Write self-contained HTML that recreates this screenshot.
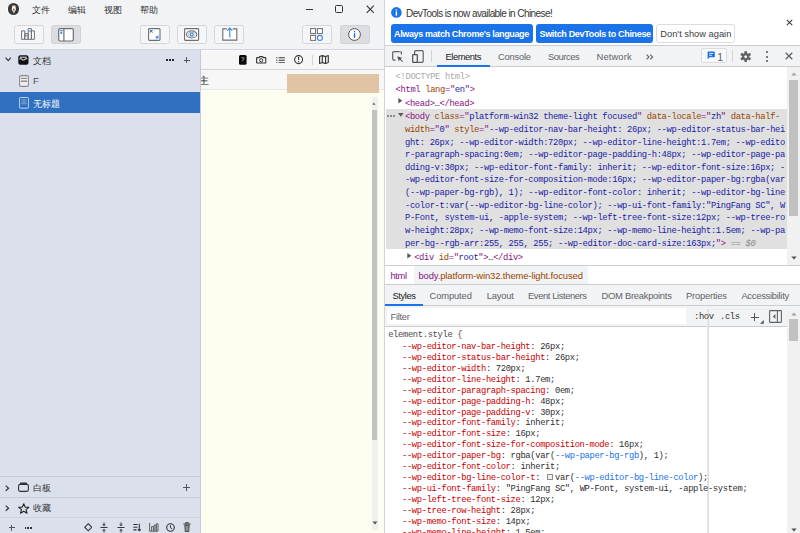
<!DOCTYPE html>
<html><head><meta charset="utf-8">
<style>
*{margin:0;padding:0;box-sizing:border-box}
html,body{width:800px;height:533px;overflow:hidden;background:#fff}
.r,.t{position:absolute}
.t{white-space:pre}
</style></head><body>
<div class="r" style="left:0px;top:0px;width:384px;height:50px;background:#f2f3f5;"></div>
<div class="r" style="left:0px;top:49px;width:384px;height:1px;background:#d0d4dc;"></div>
<div class="r" style="left:384px;top:0px;width:1px;height:533px;background:#d2d4d8;"></div>
<div class="r" style="left:7px;top:2.6px;width:13px;height:13px;border-radius:50%;background:#fff"></div>
<div class="r" style="left:7.7px;top:3.2px;width:11.7px;height:11.7px;border-radius:50%;background:#3a3a3a"></div>
<svg class="r" style="left:7.7px;top:3.2px;" width="12" height="12" viewBox="0 0 12 12"><path d="M4.3 2.9 H7.4 L7.9 6.6 L5.85 10.6 L3.8 6.6 Z" fill="#fff"/><rect x="4.3" y="2.2" width="3.1" height="1.1" fill="#e08a3c"/><path d="M5.85 6.4 V9.6" stroke="#3a3a3a" stroke-width="0.6"/><circle cx="5.85" cy="6.3" r="0.75" fill="#3a3a3a"/></svg>
<div class="t" style="left:31.6px;top:4.73px;font:normal 9px/11.7px 'Liberation Sans',sans-serif;color:#333;letter-spacing:0px;">文件</div>
<div class="t" style="left:67.6px;top:4.73px;font:normal 9px/11.7px 'Liberation Sans',sans-serif;color:#333;letter-spacing:0px;">编辑</div>
<div class="t" style="left:103.5px;top:4.73px;font:normal 9px/11.7px 'Liberation Sans',sans-serif;color:#333;letter-spacing:0px;">视图</div>
<div class="t" style="left:140px;top:4.73px;font:normal 9px/11.7px 'Liberation Sans',sans-serif;color:#333;letter-spacing:0px;">帮助</div>
<div class="r" style="left:305.5px;top:8.6px;width:7.6px;height:1.3px;background:#333;"></div>
<div class="r" style="left:335.2px;top:5px;width:7.9px;height:8.1px;border:1.3px solid #333;border-radius:1.5px"></div>
<svg class="r" style="left:365.5px;top:4.8px;" width="9" height="9" viewBox="0 0 9 9"><path d="M0.7 0.7 L7.8 7.8 M7.8 0.7 L0.7 7.8" stroke="#333" stroke-width="1.1"/></svg>
<div class="r" style="left:13.5px;top:25.2px;width:30px;height:18.5px;border:1px solid #d2d5db;border-radius:2.5px;background:#f5f6f8"></div>
<div class="r" style="left:51.1px;top:25.2px;width:30px;height:18.5px;border:1px solid #d0d2d7;border-radius:2.5px;background:#dcdde1"></div>
<div class="r" style="left:139.5px;top:25.2px;width:30px;height:18.5px;border:1px solid #d2d5db;border-radius:2.5px;background:#f5f6f8"></div>
<div class="r" style="left:177px;top:25.2px;width:30px;height:18.5px;border:1px solid #d2d5db;border-radius:2.5px;background:#f5f6f8"></div>
<div class="r" style="left:214.4px;top:25.2px;width:30px;height:18.5px;border:1px solid #d2d5db;border-radius:2.5px;background:#f5f6f8"></div>
<div class="r" style="left:302px;top:25.2px;width:30px;height:18.5px;border:1px solid #d2d5db;border-radius:2.5px;background:#f5f6f8"></div>
<div class="r" style="left:339.5px;top:25.2px;width:30px;height:18.5px;border:1px solid #d0d2d7;border-radius:2.5px;background:#dcdde1"></div>
<svg class="r" style="left:21.4px;top:28.4px;" width="14" height="12" viewBox="0 0 14 12"><path d="M0.6 2.9 H3.8 V11.3 H0.6 Z M3.8 5.7 H7.2 V11.3 H3.8 Z M7.2 0.6 H10.4 V11.3 H7.2 Z M10.4 2.9 H13.4 V11.3 H10.4 Z" fill="#fff" stroke="#6e6e6e" stroke-width="1" stroke-linejoin="round"/><rect x="4.2" y="7.2" width="2.6" height="1.1" fill="#3a86e0"/><rect x="7.7" y="2.5" width="2.2" height="1.1" fill="#3a86e0"/></svg>
<svg class="r" style="left:58px;top:27.6px;" width="16" height="14" viewBox="0 0 16 14"><rect x="0.7" y="0.7" width="14.6" height="12.3" rx="1.5" fill="#fff" stroke="#6e6e6e" stroke-width="1.2"/><path d="M5.9 0.7 V13" stroke="#6e6e6e" stroke-width="1.2"/><rect x="1.8" y="2.2" width="3" height="0.9" fill="#3a86e0"/><rect x="2.4" y="3.7" width="1.8" height="2.2" fill="#3a86e0"/></svg>
<svg class="r" style="left:148px;top:27.8px;" width="13" height="13" viewBox="0 0 13 13"><rect x="0.6" y="0.6" width="11.4" height="11.8" rx="0.8" fill="#fff" stroke="#6e6e6e" stroke-width="1.1"/><path d="M1.9 1.9 H5.2 L1.9 5.2 Z M10.5 10.6 H7.2 L10.5 7.3 Z" fill="#3d87e0"/><path d="M2.6 2.6 L4.6 4.6 M9.8 9.9 L7.8 7.9" stroke="#3d87e0" stroke-width="1"/></svg>
<svg class="r" style="left:184px;top:27.8px;" width="16" height="13" viewBox="0 0 16 13"><rect x="0.6" y="0.6" width="14" height="11.8" rx="0.8" fill="#fff" stroke="#6e6e6e" stroke-width="1.1"/><ellipse cx="7.6" cy="6.4" rx="5.2" ry="3.5" fill="none" stroke="#7a7a7a" stroke-width="1.1"/><ellipse cx="7.6" cy="6.4" rx="3.6" ry="2.4" fill="none" stroke="#b0b0b0" stroke-width="0.7"/><circle cx="7.6" cy="6.4" r="2.1" fill="#4a90e2"/><path d="M7 5.3 L8.9 6.4 L7 7.5 Z" fill="#fff"/></svg>
<svg class="r" style="left:221.9px;top:27px;" width="16" height="14" viewBox="0 0 16 14"><path d="M4.8 1.9 H0.8 V13.1 H14.8 V1.9 H10.8" fill="#fff" stroke="#6e6e6e" stroke-width="1.1"/><path d="M7.8 10.5 V1.2 M5.3 3.6 L7.8 1.1 L10.3 3.6" fill="none" stroke="#3a86e0" stroke-width="1.1"/></svg>
<svg class="r" style="left:310px;top:27.6px;" width="14" height="14" viewBox="0 0 14 14"><rect x="0.6" y="0.6" width="5" height="5" fill="#fff" stroke="#6e6e6e" stroke-width="1"/><rect x="7.4" y="0.6" width="5" height="5" fill="#fff" stroke="#6e6e6e" stroke-width="1"/><rect x="0.6" y="7.4" width="5" height="5" fill="#fff" stroke="#6e6e6e" stroke-width="1"/><circle cx="9.9" cy="9.9" r="2.5" fill="#fff" stroke="#3a86e0" stroke-width="1.1"/></svg>
<svg class="r" style="left:347.6px;top:27.6px;" width="13" height="13" viewBox="0 0 13 13"><circle cx="6.5" cy="6.5" r="5.9" fill="#fff" stroke="#555" stroke-width="1"/><circle cx="6.5" cy="3.7" r="0.8" fill="#1a6fd6"/><rect x="5.8" y="5.2" width="1.4" height="4.6" fill="#1a6fd6"/></svg>
<div class="r" style="left:0px;top:50px;width:200px;height:483px;background:#dbe0ec;"></div>
<div class="r" style="left:0px;top:91.6px;width:200px;height:21.8px;background:#2f70c0;"></div>
<svg class="r" style="left:4.5px;top:57.4px;" width="7" height="5" viewBox="0 0 7 5"><path d="M0.6 0.7 L3.2 3.6 L5.8 0.7" fill="none" stroke="#333" stroke-width="1.2"/></svg>
<svg class="r" style="left:18.4px;top:55.2px;" width="11" height="10" viewBox="0 0 11 10"><rect x="0.3" y="0.3" width="10.2" height="9.4" rx="2" fill="#111"/><path d="M1.8 2.2 H8.8" stroke="#fff" stroke-width="0.9"/><path d="M1.4 3.8 H3.8 L4.2 5 H6.6 L7 3.8 H9.4" fill="none" stroke="#fff" stroke-width="0.9"/></svg>
<div class="t" style="left:33px;top:56.13px;font:normal 9px/11.7px 'Liberation Sans',sans-serif;color:#333;letter-spacing:0px;">文档</div>
<svg class="r" style="left:19px;top:75px;" width="10" height="12" viewBox="0 0 10 12"><rect x="0.6" y="0.6" width="8.8" height="10.8" rx="1.4" fill="#f0f0f2" stroke="#8a8a8a" stroke-width="1.1"/><path d="M2 3.4 H8 M2 6.2 H8" stroke="#8c8c8c" stroke-width="1.4"/></svg>
<div class="t" style="left:33px;top:75.33px;font:normal 9.6px/12.48px 'Liberation Sans',sans-serif;color:#505050;letter-spacing:0px;">F</div>
<svg class="r" style="left:19px;top:96.6px;" width="10" height="12" viewBox="0 0 10 12"><rect x="0.5" y="0.5" width="9" height="10.6" rx="0.9" fill="none" stroke="rgba(255,255,255,0.72)" stroke-width="0.9"/><path d="M2.4 2.9 H7.6 M2.4 5 H7.6 M2.4 6.8 H7.6" stroke="rgba(255,255,255,0.55)" stroke-width="0.8"/><path d="M1.5 11.6 H8.5" stroke="rgba(255,255,255,0.4)" stroke-width="0.6" stroke-dasharray="1 1"/></svg>
<div class="t" style="left:33px;top:98.53px;font:normal 9px/11.7px 'Liberation Sans',sans-serif;color:#fff;letter-spacing:0px;">无标题</div>
<div class="r" style="left:166px;top:59px;width:2px;height:2px;background:#262626;"></div>
<div class="r" style="left:169px;top:59px;width:2px;height:2px;background:#262626;"></div>
<div class="r" style="left:172px;top:59px;width:2px;height:2px;background:#262626;"></div>
<div class="r" style="left:183.6px;top:59.5px;width:6.2px;height:1px;background:#555;"></div>
<div class="r" style="left:186.2px;top:56.9px;width:1px;height:6px;background:#555;"></div>
<div class="r" style="left:0px;top:476px;width:200px;height:1px;background:#c8ccd6;"></div>
<div class="r" style="left:0px;top:497px;width:200px;height:1px;background:#c8ccd6;"></div>
<div class="r" style="left:0px;top:517px;width:200px;height:1px;background:#cfd3dc;"></div>
<svg class="r" style="left:5px;top:484.5px;" width="5" height="7" viewBox="0 0 5 7"><path d="M0.7 0.6 L3.6 3.2 L0.7 5.8" fill="none" stroke="#333" stroke-width="1.2"/></svg>
<svg class="r" style="left:5px;top:504.5px;" width="5" height="7" viewBox="0 0 5 7"><path d="M0.7 0.6 L3.6 3.2 L0.7 5.8" fill="none" stroke="#333" stroke-width="1.2"/></svg>
<svg class="r" style="left:18.4px;top:481.8px;" width="11" height="10" viewBox="0 0 11 10"><path d="M2.4 0.6 H8.6 L9.4 2.4 H1.6 Z" fill="#333"/><rect x="0.6" y="2.4" width="9.8" height="7" rx="1.6" fill="none" stroke="#333" stroke-width="1.1"/></svg>
<div class="t" style="left:33.2px;top:482.53px;font:normal 9px/11.7px 'Liberation Sans',sans-serif;color:#333;letter-spacing:0px;">白板</div>
<div class="r" style="left:182.5px;top:486.9px;width:7px;height:1px;background:#555;"></div>
<div class="r" style="left:185.5px;top:483.9px;width:1px;height:7px;background:#555;"></div>
<svg class="r" style="left:18.4px;top:502.6px;" width="11.5" height="11" viewBox="0 0 11.5 11"><path d="M5.75 0.8 L7.2 4.1 L10.8 4.3 L8 6.6 L9 10.2 L5.75 8.2 L2.5 10.2 L3.5 6.6 L0.7 4.3 L4.3 4.1 Z" fill="none" stroke="#222" stroke-width="1.1" stroke-linejoin="round"/></svg>
<div class="t" style="left:33.2px;top:503.33px;font:normal 9px/11.7px 'Liberation Sans',sans-serif;color:#333;letter-spacing:0px;">收藏</div>
<div class="r" style="left:9px;top:527.2px;width:5.9px;height:1px;background:#555;"></div>
<div class="r" style="left:11.45px;top:524.8px;width:1px;height:5.8px;background:#555;"></div>
<div class="r" style="left:24.6px;top:527.2px;width:1.6px;height:1.6px;background:#333;"></div>
<div class="r" style="left:27.3px;top:527.2px;width:1.6px;height:1.6px;background:#333;"></div>
<div class="r" style="left:30.0px;top:527.2px;width:1.6px;height:1.6px;background:#333;"></div>
<svg class="r" style="left:83.5px;top:523.2px;" width="8.5" height="8.5" viewBox="0 0 8.5 8.5"><path d="M4.25 0.7 L7.8 4.25 L4.25 7.8 L0.7 4.25 Z" fill="none" stroke="#333" stroke-width="1.1"/></svg>
<svg class="r" style="left:100px;top:522px;" width="8" height="11" viewBox="0 0 8 11"><path d="M0.5 5.5 H7.5" stroke="#333" stroke-width="1"/><path d="M4 0.5 V3.6 M2.6 2.4 L4 3.6 L5.4 2.4 M4 10.5 V7.4 M2.6 8.6 L4 7.4 L5.4 8.6" fill="none" stroke="#333" stroke-width="1"/></svg>
<svg class="r" style="left:116.5px;top:522px;" width="8" height="11" viewBox="0 0 8 11"><path d="M0.5 5.5 H7.5" stroke="#333" stroke-width="1"/><path d="M4 0.5 V3.6 M2.6 2.4 L4 3.6 L5.4 2.4 M4 10.5 V7.4 M2.6 8.6 L4 7.4 L5.4 8.6" fill="none" stroke="#333" stroke-width="1"/></svg>
<svg class="r" style="left:133px;top:523px;" width="8" height="9" viewBox="0 0 8 9"><path d="M0.3 1.5 H4.5 M0.3 4.2 H4.5 M0.3 6.9 H3.5 M6.3 0.8 V7.8 M4.8 6.3 L6.3 7.8 L7.8 6.3" fill="none" stroke="#333" stroke-width="1.1"/></svg>
<svg class="r" style="left:149px;top:522.4px;" width="9.5" height="10" viewBox="0 0 9.5 10"><path d="M0.6 1 V9.2 H9 M2.6 9.2 V4.5 H4.4 V9.2 M5.2 9.2 V3 H7 V9.2 M7.4 9.2 V1.8 H9 V9.2" fill="none" stroke="#555" stroke-width="0.9"/></svg>
<svg class="r" style="left:165.6px;top:522.6px;" width="9" height="9" viewBox="0 0 9 9"><circle cx="4.5" cy="4.5" r="3.8" fill="none" stroke="#333" stroke-width="1.1"/><path d="M4.4 2.2 V4.7 L6.2 5.8" fill="none" stroke="#333" stroke-width="1"/></svg>
<svg class="r" style="left:182.6px;top:522px;" width="8" height="10.5" viewBox="0 0 8 10.5"><path d="M0.3 2 H7.7 M2.7 2 V0.6 H5.3 V2" fill="none" stroke="#444" stroke-width="1"/><path d="M1.2 2.6 L1.8 10 H6.2 L6.8 2.6 Z" fill="#555"/><path d="M3.2 4 V8.8 M4.8 4 V8.8" stroke="#dde2ec" stroke-width="0.6"/></svg>
<div class="r" style="left:200px;top:50px;width:184px;height:483px;background:#fdfeef;"></div>
<div class="r" style="left:200px;top:50px;width:1px;height:483px;background:#c6cad3;"></div>
<div class="r" style="left:201px;top:50px;width:183px;height:19px;background:#f6f6f6;"></div>
<div class="r" style="left:201px;top:50px;width:183px;height:1px;background:#fbfbfc;"></div>
<div class="r" style="left:201px;top:68.6px;width:183px;height:1px;background:#d2d5dc;"></div>
<div class="r" style="left:201px;top:69.6px;width:183px;height:19.4px;background:#f7f7f7;"></div>
<div class="r" style="left:201px;top:89px;width:183px;height:1px;background:#e5e6ea;"></div>
<div class="r" style="left:287px;top:74px;width:92px;height:18.6px;background:#e1c3a5;"></div>
<div class="r" style="left:200.8px;top:70px;width:20px;height:20px;overflow:hidden">
<div class="t" style="left:-2.2px;top:4.63px;font:normal 9.6px/12.48px 'Liberation Sans',sans-serif;color:#222;letter-spacing:0px;">主</div>
</div>
<svg class="r" style="left:239px;top:55px;" width="7.6" height="9.8" viewBox="0 0 7.6 9.8"><rect x="0" y="0" width="7.6" height="9.8" rx="1.5" fill="#0a0a0a"/><path d="M2.2 2.6 H5.2 L3.4 4 H5.4 L2.6 6.4" fill="none" stroke="#8a8a8a" stroke-width="0.8"/></svg>
<svg class="r" style="left:256.3px;top:56.4px;" width="10.4" height="7.6" viewBox="0 0 10.4 7.6"><path d="M0.6 2.2 Q0.6 1.6 1.2 1.6 H3 L3.8 0.6 H6.6 L7.4 1.6 H9.2 Q9.8 1.6 9.8 2.2 V6.6 Q9.8 7 9.4 7 H1 Q0.6 7 0.6 6.6 Z" fill="none" stroke="#333" stroke-width="1.1"/><circle cx="5.2" cy="4.3" r="1.6" fill="none" stroke="#333" stroke-width="1"/></svg>
<svg class="r" style="left:275.8px;top:56.6px;" width="9" height="6.6" viewBox="0 0 9 6.6"><path d="M2.6 0.7 H8.8 M2.6 3.3 H8.8 M2.6 5.9 H8.8" stroke="#333" stroke-width="1.1"/><path d="M0.2 0.7 H1.4 M0.2 3.3 H1.4 M0.2 5.9 H1.4" stroke="#333" stroke-width="1.1"/></svg>
<svg class="r" style="left:294px;top:55.4px;" width="9.2" height="9.2" viewBox="0 0 9.2 9.2"><circle cx="4.6" cy="4.6" r="4" fill="none" stroke="#333" stroke-width="1.1"/><path d="M4.6 1.9 V5" stroke="#333" stroke-width="1.1"/><circle cx="4.6" cy="6.6" r="0.7" fill="#333"/></svg>
<div class="r" style="left:311.6px;top:54.8px;width:1px;height:10px;background:#d4d4d8;"></div>
<svg class="r" style="left:319.4px;top:55.4px;" width="10" height="9" viewBox="0 0 10 9"><path d="M0.6 1.6 L3.3 0.6 L6.6 1.6 L9.3 0.6 V7.6 L6.6 8.5 L3.3 7.6 L0.6 8.5 Z M3.3 0.6 V7.6 M6.6 1.6 V8.5" fill="none" stroke="#333" stroke-width="1.1" stroke-linejoin="round"/></svg>
<div class="r" style="left:372px;top:96.6px;width:6px;height:433px;background:#f0f0f0;"></div>
<div class="r" style="left:372.4px;top:110.2px;width:4.8px;height:329.5px;background:#c3c3c3;"></div>
<svg class="r" style="left:371.6px;top:102.2px;" width="4" height="3" viewBox="0 0 4 3"><path d="M0.4 2.8 L1.6 0.4 L3.6 2.8 Z" fill="#666"/></svg>
<svg class="r" style="left:372px;top:520.5px;" width="6" height="4" viewBox="0 0 6 4"><path d="M0.5 0.5 L3 3.5 L5.5 0.5 Z" fill="#555"/></svg>
<div class="r" style="left:385px;top:0px;width:415px;height:533px;background:#ffffff;"></div>
<div class="t" style="left:406px;top:6.73px;font:normal 10px/13.0px 'Liberation Sans',sans-serif;color:#333;letter-spacing:-0.57px;">DevTools is now available in Chinese!</div>
<div class="r" style="left:390.9px;top:24px;width:142px;height:18.5px;border-radius:3px;background:#1a73e8"></div>
<div class="r" style="left:536.4px;top:24px;width:116.6px;height:18.5px;border-radius:3px;background:#1a73e8"></div>
<div class="r" style="left:656px;top:24px;width:78.5px;height:18.5px;border-radius:3px;background:#fff;border:1px solid #dadce0"></div>
<div class="t" style="left:394px;top:28.53px;font:bold 9px/11.7px 'Liberation Sans',sans-serif;color:#fff;letter-spacing:-0.36px;">Always match Chrome&#x27;s language</div>
<div class="t" style="left:539.5px;top:28.53px;font:bold 9px/11.7px 'Liberation Sans',sans-serif;color:#fff;letter-spacing:-0.33px;">Switch DevTools to Chinese</div>
<div class="t" style="left:660.3px;top:28.23px;font:normal 9.3px/12.09px 'Liberation Sans',sans-serif;color:#3c4043;letter-spacing:0.0px;">Don&#x27;t show again</div>
<div class="r" style="left:385px;top:44.5px;width:415px;height:1px;background:#cbcdd1;"></div>
<div class="r" style="left:385px;top:45.5px;width:415px;height:20.5px;background:#f1f3f4;"></div>
<div class="r" style="left:385px;top:66px;width:415px;height:1px;background:#cbcdd1;"></div>
<div class="r" style="left:436.5px;top:64.8px;width:53.4px;height:1.8px;background:#1a73e8;"></div>
<div class="t" style="left:445.5px;top:51.13px;font:normal 9.4px/12.22px 'Liberation Sans',sans-serif;color:#202124;letter-spacing:-0.45px;">Elements</div>
<div class="t" style="left:498px;top:51.13px;font:normal 9.4px/12.22px 'Liberation Sans',sans-serif;color:#5f6368;letter-spacing:-0.22px;">Console</div>
<div class="t" style="left:548px;top:51.13px;font:normal 9.4px/12.22px 'Liberation Sans',sans-serif;color:#5f6368;letter-spacing:-0.45px;">Sources</div>
<div class="t" style="left:596.6px;top:51.13px;font:normal 9.4px/12.22px 'Liberation Sans',sans-serif;color:#5f6368;letter-spacing:0.1px;">Network</div>
<div class="r" style="left:431px;top:50px;width:1px;height:12px;background:#d0d3d7;"></div>
<div class="r" style="left:732px;top:50px;width:1px;height:12px;background:#d0d3d7;"></div>
<svg class="r" style="left:390.8px;top:6.6px;" width="11" height="11" viewBox="0 0 11 11"><circle cx="5.4" cy="5.4" r="5.3" fill="#1a73e8"/><circle cx="5.4" cy="3" r="0.8" fill="#fff"/><rect x="4.7" y="4.5" width="1.4" height="4.2" fill="#fff"/></svg>
<svg class="r" style="left:786px;top:19px;" width="7" height="7" viewBox="0 0 7 7"><path d="M0.8 0.8 L6.2 6.2 M6.2 0.8 L0.8 6.2" stroke="#444" stroke-width="1.2"/></svg>
<svg class="r" style="left:391.6px;top:51px;" width="11.5" height="11.5" viewBox="0 0 11.5 11.5"><path d="M7.8 0.7 H1.8 Q0.7 0.7 0.7 1.8 V8 Q0.7 9.1 1.8 9.1 H3.6 M9.4 3.6 V1.8 Q9.4 0.7 8.3 0.7" fill="none" stroke="#5f6368" stroke-width="1.2"/><path d="M5.2 5.2 L10.6 6.9 L8.4 7.7 L10.9 10.2 L10.2 10.9 L7.7 8.4 L6.9 10.6 Z" fill="#4f5256"/></svg>
<svg class="r" style="left:411.8px;top:49.6px;" width="12" height="13" viewBox="0 0 12 13"><rect x="2.6" y="0.7" width="8.6" height="11.6" rx="1" fill="none" stroke="#5f6368" stroke-width="1.2"/><rect x="0.7" y="4.6" width="4.6" height="7.7" rx="0.6" fill="#f1f3f4" stroke="#4a4d51" stroke-width="1.2"/></svg>
<svg class="r" style="left:646px;top:53.6px;" width="8" height="6" viewBox="0 0 8 6"><path d="M0.6 0.6 L3 3 L0.6 5.4 M4.2 0.6 L6.6 3 L4.2 5.4" fill="none" stroke="#5f6368" stroke-width="1.1"/></svg>
<div class="r" style="left:701.4px;top:48.4px;width:25.6px;height:15px;border:1px solid #dadce0;border-radius:2px;background:#f8f9fa"></div>
<svg class="r" style="left:706.8px;top:51.4px;" width="8.4" height="8.8" viewBox="0 0 8.4 8.8"><path d="M1.2 0.6 H7.2 Q7.8 0.6 7.8 1.2 V5.6 Q7.8 6.2 7.2 6.2 H2.6 L0.6 8.2 V1.2 Q0.6 0.6 1.2 0.6 Z" fill="#1a73e8"/><path d="M2.2 2.5 H6.2 M2.2 4.3 H5" stroke="#fff" stroke-width="0.8"/></svg>
<div class="t" style="left:717.2px;top:50.54px;font:normal 10.6px/13.78px 'Liberation Sans',sans-serif;color:#5f6368;letter-spacing:0px;">1</div>
<svg class="r" style="left:740.2px;top:50.9px;" width="11.4" height="11.4" viewBox="0 0 11.4 11.4"><g transform="translate(5.7 5.7)" fill="#5f6368"><circle r="3.6"/><rect x="-1.3" y="-5.5" width="2.6" height="11" /><rect x="-1.3" y="-5.5" width="2.6" height="11" transform="rotate(60)"/><rect x="-1.3" y="-5.5" width="2.6" height="11" transform="rotate(120)"/></g><circle cx="5.7" cy="5.7" r="1.5" fill="#f1f3f4"/></svg>
<div class="r" style="left:766.4px;top:51.4px;width:2.1px;height:2.1px;border-radius:50%;background:#505357"></div>
<div class="r" style="left:766.4px;top:55.6px;width:2.1px;height:2.1px;border-radius:50%;background:#505357"></div>
<div class="r" style="left:766.4px;top:59.8px;width:2.1px;height:2.1px;border-radius:50%;background:#505357"></div>
<svg class="r" style="left:785.4px;top:52.2px;" width="8" height="8" viewBox="0 0 8 8"><path d="M0.7 0.7 L7.3 7.3 M7.3 0.7 L0.7 7.3" stroke="#5f6368" stroke-width="1.3"/></svg>
<div class="r" style="left:386px;top:109px;width:401px;height:139.6px;background:#e0e0e0;"></div>
<div class="t" style="left:395.6px;top:72.24px;font:normal 8.8px/11.44px 'Liberation Mono',monospace;color:#303030;letter-spacing:-0.345px;white-space:pre"><span style="color:#a9a9a9">&lt;!DOCTYPE html&gt;</span></div>
<div class="t" style="left:395.6px;top:85.34px;font:normal 8.8px/11.44px 'Liberation Mono',monospace;color:#303030;letter-spacing:-0.345px;white-space:pre"><span style="color:#881280">&lt;html </span><span style="color:#994500">lang</span><span style="color:#881280">=&quot;</span><span style="color:#1a1aa6">en</span><span style="color:#881280">&quot;&gt;</span></div>
<div class="t" style="left:405px;top:99.04px;font:normal 8.8px/11.44px 'Liberation Mono',monospace;color:#303030;letter-spacing:-0.345px;white-space:pre"><span style="color:#881280">&lt;head&gt;</span><span style="color:#303030">…</span><span style="color:#881280">&lt;/head&gt;</span></div>
<div class="t" style="left:405px;top:112.24px;font:normal 8.8px/11.44px 'Liberation Mono',monospace;color:#303030;letter-spacing:-0.345px;white-space:pre"><span style="color:#881280">&lt;body </span><span style="color:#994500">class</span><span style="color:#881280">=&quot;</span><span style="color:#1a1aa6">platform-win32 theme-light focused</span><span style="color:#881280">&quot; </span><span style="color:#994500">data-locale</span><span style="color:#881280">=&quot;</span><span style="color:#1a1aa6">zh</span><span style="color:#881280">&quot; </span><span style="color:#994500">data-half-</span></div>
<div class="t" style="left:405px;top:124.89px;font:normal 8.8px/11.44px 'Liberation Mono',monospace;color:#303030;letter-spacing:-0.345px;white-space:pre"><span style="color:#994500">width</span><span style="color:#881280">=&quot;</span><span style="color:#1a1aa6">0</span><span style="color:#881280">&quot; </span><span style="color:#994500">style</span><span style="color:#881280">=&quot;</span><span style="color:#1a1aa6">--wp-editor-nav-bar-height: 26px; --wp-editor-status-bar-hei</span></div>
<div class="t" style="left:405px;top:137.54px;font:normal 8.8px/11.44px 'Liberation Mono',monospace;color:#303030;letter-spacing:-0.345px;white-space:pre"><span style="color:#1a1aa6">ght: 26px; --wp-editor-width:720px; --wp-editor-line-height:1.7em; --wp-edito</span></div>
<div class="t" style="left:405px;top:150.19px;font:normal 8.8px/11.44px 'Liberation Mono',monospace;color:#303030;letter-spacing:-0.345px;white-space:pre"><span style="color:#1a1aa6">r-paragraph-spacing:0em; --wp-editor-page-padding-h:48px; --wp-editor-page-pa</span></div>
<div class="t" style="left:405px;top:162.84px;font:normal 8.8px/11.44px 'Liberation Mono',monospace;color:#303030;letter-spacing:-0.345px;white-space:pre"><span style="color:#1a1aa6">dding-v:30px; --wp-editor-font-family: inherit; --wp-editor-font-size:16px; -</span></div>
<div class="t" style="left:405px;top:175.49px;font:normal 8.8px/11.44px 'Liberation Mono',monospace;color:#303030;letter-spacing:-0.345px;white-space:pre"><span style="color:#1a1aa6">-wp-editor-font-size-for-composition-mode:16px; --wp-editor-paper-bg:rgba(var</span></div>
<div class="t" style="left:405px;top:188.14px;font:normal 8.8px/11.44px 'Liberation Mono',monospace;color:#303030;letter-spacing:-0.345px;white-space:pre"><span style="color:#1a1aa6">(--wp-paper-bg-rgb), 1); --wp-editor-font-color: inherit; --wp-editor-bg-line</span></div>
<div class="t" style="left:405px;top:200.79px;font:normal 8.8px/11.44px 'Liberation Mono',monospace;color:#303030;letter-spacing:-0.345px;white-space:pre"><span style="color:#1a1aa6">-color-t:var(--wp-editor-bg-line-color); --wp-ui-font-family:&quot;PingFang SC&quot;, W</span></div>
<div class="t" style="left:405px;top:213.44px;font:normal 8.8px/11.44px 'Liberation Mono',monospace;color:#303030;letter-spacing:-0.345px;white-space:pre"><span style="color:#1a1aa6">P-Font, system-ui, -apple-system; --wp-left-tree-font-size:12px; --wp-tree-ro</span></div>
<div class="t" style="left:405px;top:226.09px;font:normal 8.8px/11.44px 'Liberation Mono',monospace;color:#303030;letter-spacing:-0.345px;white-space:pre"><span style="color:#1a1aa6">w-height:28px; --wp-memo-font-size:14px; --wp-memo-line-height:1.5em; --wp-pa</span></div>
<div class="t" style="left:405px;top:238.74px;font:normal 8.8px/11.44px 'Liberation Mono',monospace;color:#303030;letter-spacing:-0.345px;white-space:pre"><span style="color:#1a1aa6">per-bg--rgb-arr:255, 255, 255; --wp-editor-doc-card-size:163px;</span><span style="color:#881280">&quot;&gt; </span><span style="color:#8a8a8a;font-style:italic">== $0</span></div>
<div class="t" style="left:414.2px;top:252.54px;font:normal 8.8px/11.44px 'Liberation Mono',monospace;color:#303030;letter-spacing:-0.345px;white-space:pre"><span style="color:#881280">&lt;div </span><span style="color:#994500">id</span><span style="color:#881280">=&quot;</span><span style="color:#1a1aa6">root</span><span style="color:#881280">&quot;&gt;</span><span style="color:#303030">…</span><span style="color:#881280">&lt;/div&gt;</span></div>
<svg class="r" style="left:398px;top:98.4px;" width="5" height="6" viewBox="0 0 5 6"><path d="M0.3 0 L4.4 2.8 L0.3 5.6 Z" fill="#5a5a5a"/></svg>
<svg class="r" style="left:397.6px;top:113px;" width="6" height="4" viewBox="0 0 6 4"><path d="M0 0 H5.6 L2.8 3.8 Z" fill="#5a5a5a"/></svg>
<svg class="r" style="left:407.4px;top:252.6px;" width="5" height="6" viewBox="0 0 5 6"><path d="M0.3 0 L4.4 2.8 L0.3 5.6 Z" fill="#5a5a5a"/></svg>
<div class="r" style="left:387.4px;top:115.2px;width:1.6px;height:1.6px;background:#8c8c8c;"></div>
<div class="r" style="left:390.2px;top:115.2px;width:1.6px;height:1.6px;background:#8c8c8c;"></div>
<div class="r" style="left:393.0px;top:115.2px;width:1.6px;height:1.6px;background:#8c8c8c;"></div>
<div class="r" style="left:787px;top:67px;width:13px;height:198px;background:#f1f1f1;"></div>
<div class="r" style="left:788.8px;top:80.3px;width:9.5px;height:136px;background:#c1c1c1;"></div>
<svg class="r" style="left:790.5px;top:72.4px;" width="6" height="4" viewBox="0 0 6 4"><path d="M0.3 3.6 L3 0.4 L5.7 3.6 Z" fill="#a3a3a3"/></svg>
<svg class="r" style="left:790.5px;top:255.6px;" width="6" height="4" viewBox="0 0 6 4"><path d="M0.3 0.4 L3 3.6 L5.7 0.4 Z" fill="#505050"/></svg>
<div class="r" style="left:385px;top:265px;width:415px;height:1px;background:#cbcdd1;"></div>
<div class="r" style="left:414px;top:266px;width:174px;height:18px;background:#f1f3f4;"></div>
<div class="t" style="left:390.4px;top:270.33px;font:normal 9.4px/12.22px 'Liberation Sans',sans-serif;color:#881280;letter-spacing:-0.3px;">html</div>
<div class="t" style="left:418.5px;top:270.33px;font:normal 9.4px/12.22px 'Liberation Sans',sans-serif;color:#994500;letter-spacing:-0.1px;"><span style="color:#881280">body</span>.platform-win32.theme-light.focused</div>
<div class="r" style="left:385px;top:284px;width:415px;height:1px;background:#cbcdd1;"></div>
<div class="r" style="left:385px;top:285px;width:415px;height:20px;background:#f1f3f4;"></div>
<div class="r" style="left:385px;top:305px;width:415px;height:1px;background:#cbcdd1;"></div>
<div class="r" style="left:385px;top:303.6px;width:37.6px;height:2px;background:#1a73e8;"></div>
<div class="t" style="left:392.4px;top:289.93px;font:normal 9.4px/12.22px 'Liberation Sans',sans-serif;color:#202124;letter-spacing:-0.4px;">Styles</div>
<div class="t" style="left:429.5px;top:289.93px;font:normal 9.4px/12.22px 'Liberation Sans',sans-serif;color:#5f6368;letter-spacing:-0.12px;">Computed</div>
<div class="t" style="left:486.7px;top:289.93px;font:normal 9.4px/12.22px 'Liberation Sans',sans-serif;color:#5f6368;letter-spacing:-0.2px;">Layout</div>
<div class="t" style="left:528px;top:289.93px;font:normal 9.4px/12.22px 'Liberation Sans',sans-serif;color:#5f6368;letter-spacing:-0.4px;">Event Listeners</div>
<div class="t" style="left:601.5px;top:289.93px;font:normal 9.4px/12.22px 'Liberation Sans',sans-serif;color:#5f6368;letter-spacing:-0.26px;">DOM Breakpoints</div>
<div class="t" style="left:685.9px;top:289.93px;font:normal 9.4px/12.22px 'Liberation Sans',sans-serif;color:#5f6368;letter-spacing:-0.18px;">Properties</div>
<div class="t" style="left:741.4px;top:289.93px;font:normal 9.4px/12.22px 'Liberation Sans',sans-serif;color:#5f6368;letter-spacing:-0.27px;">Accessibility</div>
<div class="r" style="left:385px;top:306px;width:415px;height:20px;background:#f1f3f4;"></div>
<div class="r" style="left:387px;top:308px;width:299px;height:16px;background:#ffffff;"></div>
<div class="r" style="left:385px;top:326px;width:415px;height:1px;background:#cbcdd1;"></div>
<div class="t" style="left:390.5px;top:311.33px;font:normal 9.4px/12.22px 'Liberation Sans',sans-serif;color:#5f6368;letter-spacing:-0.3px;">Filter</div>
<div class="r" style="left:707px;top:308.5px;width:1px;height:225px;background:#e9e9e9;"></div>
<div class="r" style="left:708px;top:308.5px;width:1px;height:225px;background:#dcdcdc;"></div>
<div class="r" style="left:709px;top:308.5px;width:79px;height:1px;background:#ececec;"></div>
<div class="t" style="left:694px;top:312.24px;font:normal 8.8px/11.44px 'Liberation Mono',monospace;color:#333;letter-spacing:-0.345px;">:hov</div>
<div class="t" style="left:720px;top:312.24px;font:normal 8.8px/11.44px 'Liberation Mono',monospace;color:#333;letter-spacing:-0.345px;">.cls</div>
<div class="r" style="left:750.6px;top:316.5px;width:8px;height:1px;background:#555;"></div>
<div class="r" style="left:754.1px;top:313px;width:1px;height:8px;background:#555;"></div>
<svg class="r" style="left:759.5px;top:320px;" width="4" height="4" viewBox="0 0 4 4"><path d="M3.8 0 V3.8 H0 Z" fill="#555"/></svg>
<svg class="r" style="left:768.6px;top:309.8px;" width="13" height="13" viewBox="0 0 13 13"><rect x="0.6" y="0.6" width="11.8" height="11.8" rx="0.8" fill="none" stroke="#5f6368" stroke-width="1.1"/><path d="M8.4 0.6 V12.4" stroke="#5f6368" stroke-width="1.1"/><path d="M6.4 4 L3.8 6.5 L6.4 9 Z" fill="#5f6368"/></svg>
<div class="t" style="left:388.2px;top:330.04px;font:normal 8.8px/11.44px 'Liberation Mono',monospace;color:#4a4a4a;letter-spacing:-0.345px;">element.style {</div>
<div class="t" style="left:402px;top:341.84px;font:normal 8.8px/11.44px 'Liberation Mono',monospace;color:#303030;letter-spacing:-0.345px;white-space:pre"><span style="color:#c80000">--wp-editor-nav-bar-height</span><span style="color:#303030">: </span><span style="color:#303030">26px</span><span style="color:#303030">;</span></div>
<div class="t" style="left:402px;top:352.79px;font:normal 8.8px/11.44px 'Liberation Mono',monospace;color:#303030;letter-spacing:-0.345px;white-space:pre"><span style="color:#c80000">--wp-editor-status-bar-height</span><span style="color:#303030">: </span><span style="color:#303030">26px</span><span style="color:#303030">;</span></div>
<div class="t" style="left:402px;top:363.74px;font:normal 8.8px/11.44px 'Liberation Mono',monospace;color:#303030;letter-spacing:-0.345px;white-space:pre"><span style="color:#c80000">--wp-editor-width</span><span style="color:#303030">: </span><span style="color:#303030">720px</span><span style="color:#303030">;</span></div>
<div class="t" style="left:402px;top:374.69px;font:normal 8.8px/11.44px 'Liberation Mono',monospace;color:#303030;letter-spacing:-0.345px;white-space:pre"><span style="color:#c80000">--wp-editor-line-height</span><span style="color:#303030">: </span><span style="color:#303030">1.7em</span><span style="color:#303030">;</span></div>
<div class="t" style="left:402px;top:385.64px;font:normal 8.8px/11.44px 'Liberation Mono',monospace;color:#303030;letter-spacing:-0.345px;white-space:pre"><span style="color:#c80000">--wp-editor-paragraph-spacing</span><span style="color:#303030">: </span><span style="color:#303030">0em</span><span style="color:#303030">;</span></div>
<div class="t" style="left:402px;top:396.59px;font:normal 8.8px/11.44px 'Liberation Mono',monospace;color:#303030;letter-spacing:-0.345px;white-space:pre"><span style="color:#c80000">--wp-editor-page-padding-h</span><span style="color:#303030">: </span><span style="color:#303030">48px</span><span style="color:#303030">;</span></div>
<div class="t" style="left:402px;top:407.54px;font:normal 8.8px/11.44px 'Liberation Mono',monospace;color:#303030;letter-spacing:-0.345px;white-space:pre"><span style="color:#c80000">--wp-editor-page-padding-v</span><span style="color:#303030">: </span><span style="color:#303030">30px</span><span style="color:#303030">;</span></div>
<div class="t" style="left:402px;top:418.49px;font:normal 8.8px/11.44px 'Liberation Mono',monospace;color:#303030;letter-spacing:-0.345px;white-space:pre"><span style="color:#c80000">--wp-editor-font-family</span><span style="color:#303030">: </span><span style="color:#303030">inherit</span><span style="color:#303030">;</span></div>
<div class="t" style="left:402px;top:429.44px;font:normal 8.8px/11.44px 'Liberation Mono',monospace;color:#303030;letter-spacing:-0.345px;white-space:pre"><span style="color:#c80000">--wp-editor-font-size</span><span style="color:#303030">: </span><span style="color:#303030">16px</span><span style="color:#303030">;</span></div>
<div class="t" style="left:402px;top:440.39px;font:normal 8.8px/11.44px 'Liberation Mono',monospace;color:#303030;letter-spacing:-0.345px;white-space:pre"><span style="color:#c80000">--wp-editor-font-size-for-composition-mode</span><span style="color:#303030">: </span><span style="color:#303030">16px</span><span style="color:#303030">;</span></div>
<div class="t" style="left:402px;top:451.34px;font:normal 8.8px/11.44px 'Liberation Mono',monospace;color:#303030;letter-spacing:-0.345px;white-space:pre"><span style="color:#c80000">--wp-editor-paper-bg</span><span style="color:#303030">: </span><span style="color:#303030">rgba(var(</span><span style="color:#1a73e8">--wp-paper-bg-rgb</span><span style="color:#303030">), 1)</span><span style="color:#303030">;</span></div>
<div class="t" style="left:402px;top:462.29px;font:normal 8.8px/11.44px 'Liberation Mono',monospace;color:#303030;letter-spacing:-0.345px;white-space:pre"><span style="color:#c80000">--wp-editor-font-color</span><span style="color:#303030">: </span><span style="color:#303030">inherit</span><span style="color:#303030">;</span></div>
<div class="t" style="left:402px;top:473.24px;font:normal 8.8px/11.44px 'Liberation Mono',monospace;color:#303030;letter-spacing:-0.345px;white-space:pre"><span style="color:#c80000">--wp-editor-bg-line-color-t</span><span style="color:#303030">: </span><span style="color:#303030">  var(</span><span style="color:#1a73e8">--wp-editor-bg-line-color</span><span style="color:#303030">)</span><span style="color:#303030">;</span></div>
<div class="t" style="left:402px;top:484.19px;font:normal 8.8px/11.44px 'Liberation Mono',monospace;color:#303030;letter-spacing:-0.345px;white-space:pre"><span style="color:#c80000">--wp-ui-font-family</span><span style="color:#303030">: </span><span style="color:#303030">&quot;PingFang SC&quot;, WP-Font, system-ui, -apple-system</span><span style="color:#303030">;</span></div>
<div class="t" style="left:402px;top:495.14px;font:normal 8.8px/11.44px 'Liberation Mono',monospace;color:#303030;letter-spacing:-0.345px;white-space:pre"><span style="color:#c80000">--wp-left-tree-font-size</span><span style="color:#303030">: </span><span style="color:#303030">12px</span><span style="color:#303030">;</span></div>
<div class="t" style="left:402px;top:506.09px;font:normal 8.8px/11.44px 'Liberation Mono',monospace;color:#303030;letter-spacing:-0.345px;white-space:pre"><span style="color:#c80000">--wp-tree-row-height</span><span style="color:#303030">: </span><span style="color:#303030">28px</span><span style="color:#303030">;</span></div>
<div class="t" style="left:402px;top:517.04px;font:normal 8.8px/11.44px 'Liberation Mono',monospace;color:#303030;letter-spacing:-0.345px;white-space:pre"><span style="color:#c80000">--wp-memo-font-size</span><span style="color:#303030">: </span><span style="color:#303030">14px</span><span style="color:#303030">;</span></div>
<div class="t" style="left:402px;top:527.99px;font:normal 8.8px/11.44px 'Liberation Mono',monospace;color:#303030;letter-spacing:-0.345px;white-space:pre"><span style="color:#c80000">--wp-memo-line-height</span><span style="color:#303030">: </span><span style="color:#303030">1.5em</span><span style="color:#303030">;</span></div>
<div class="r" style="left:547.2px;top:474px;width:6px;height:6px;background:#efefef;border:1px solid #8c8c8c"></div>
<div class="r" style="left:787px;top:309.8px;width:13px;height:224px;background:#f1f1f1;"></div>
<div class="r" style="left:788.8px;top:318.8px;width:9.5px;height:22px;background:#c1c1c1;"></div>
<svg class="r" style="left:790.5px;top:311.8px;" width="6" height="4" viewBox="0 0 6 4"><path d="M0.3 3.6 L3 0.4 L5.7 3.6 Z" fill="#a3a3a3"/></svg>
<svg class="r" style="left:790.5px;top:527.8px;" width="6" height="4" viewBox="0 0 6 4"><path d="M0.3 0.4 L3 3.6 L5.7 0.4 Z" fill="#505050"/></svg>
</body></html>
